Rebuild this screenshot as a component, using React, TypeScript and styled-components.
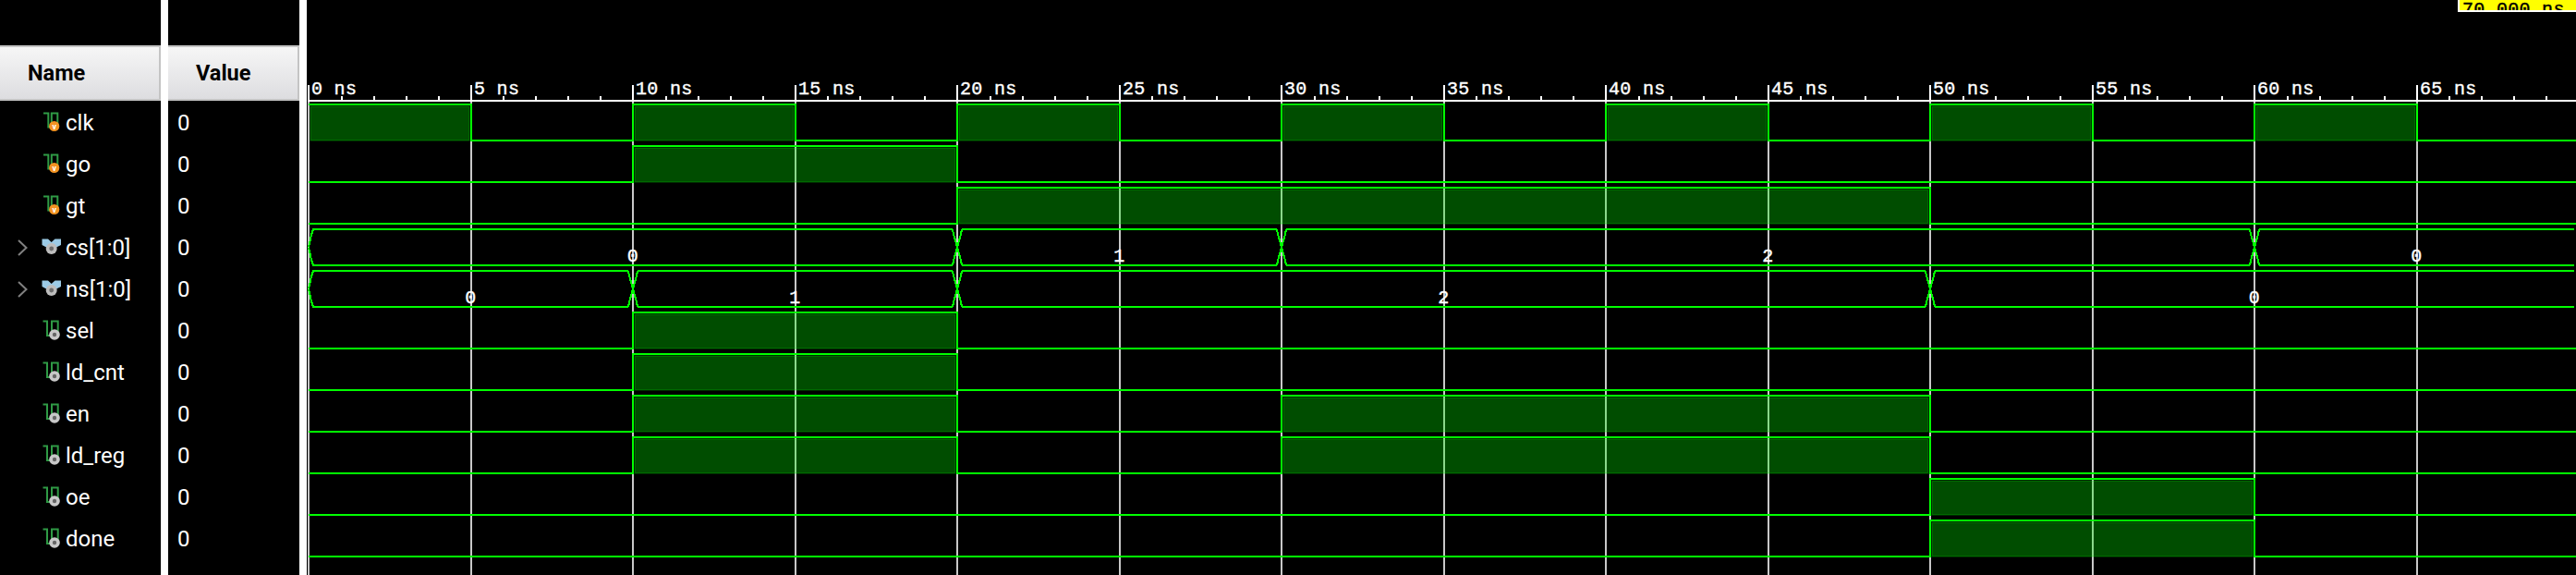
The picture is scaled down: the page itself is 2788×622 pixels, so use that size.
import React from "react";
import styled, { createGlobalStyle } from "styled-components";

const GlobalStyle = createGlobalStyle`
  html, body { margin: 0; padding: 0; background: #000; overflow: hidden; }
`;

type Kind = "input" | "local" | "bus";
type Signal = { name: string; kind: Kind; high?: [number, number][]; bus?: [number, number, string][] };

const signals: Signal[] = [
  { name: "clk", kind: "input", high: [[0, 5], [10, 15], [20, 25], [30, 35], [40, 45], [50, 55], [60, 65]] },
  { name: "go", kind: "input", high: [[10, 20]] },
  { name: "gt", kind: "input", high: [[20, 50]] },
  { name: "cs[1:0]", kind: "bus", bus: [[0, 20, "0"], [20, 30, "1"], [30, 60, "2"], [60, 70, "0"]] },
  { name: "ns[1:0]", kind: "bus", bus: [[0, 10, "0"], [10, 20, "1"], [20, 50, "2"], [50, 70, "0"]] },
  { name: "sel", kind: "local", high: [[10, 20]] },
  { name: "ld_cnt", kind: "local", high: [[10, 20]] },
  { name: "en", kind: "local", high: [[10, 20], [30, 50]] },
  { name: "ld_reg", kind: "local", high: [[10, 20], [30, 50]] },
  { name: "oe", kind: "local", high: [[50, 60]] },
  { name: "done", kind: "local", high: [[50, 60]] },
];

const ROW = 45;
const hiY = (i: number) => 113 + ROW * i;
const loY = (i: number) => 152 + ROW * i;
const tx = (ns: number) => Math.round(334.4 + 35.1 * ns);
const RIGHT = 2788;
const majors = Array.from({ length: 14 }, (_, i) => i * 5);
const minors = Array.from({ length: 71 }, (_, i) => i).filter((n) => n % 5 !== 0);

const Page = styled.div`
  display: flex;
  width: 2788px;
  height: 622px;
  background: #000;
  position: relative;
  overflow: hidden;
`;

const Pane = styled.div<{ $width: number }>`
  flex: 0 0 ${(p) => p.$width}px;
  padding-top: 49px;
  box-sizing: border-box;
`;

const Divider = styled.div`
  flex: 0 0 8px;
  background: #fff;
`;

const Header = styled.div<{ $pad: number }>`
  box-sizing: border-box;
  height: 60px;
  margin-bottom: 1px;
  padding-left: ${(p) => p.$pad}px;
  display: flex;
  align-items: center;
  background: linear-gradient(#f6f6f6, #dddde0);
  border-top: 2px solid #c4c4c4;
  border-bottom: 2px solid #c4c4c4;
  border-right: 2px solid #c4c4c4;
  font: 700 23.5px "Roboto", "Liberation Sans", sans-serif;
  color: #000;
`;

const Row = styled.div`
  height: 45px;
  display: flex;
  align-items: center;
  padding-left: 18px;
  color: #fff;
  font: 400 24px "Roboto", "Open Sans", sans-serif;
`;

const ValueRow = styled(Row)`
  padding-left: 10px;
`;

const Expander = styled.svg`
  flex: 0 0 12px;
  width: 12px;
  height: 18px;
  margin-right: 14px;
`;

const IconBox = styled.svg`
  flex: 0 0 24px;
  width: 24px;
  height: 24px;
  margin-right: 3px;
`;

const WaveCanvas = styled.svg`
  flex: 0 0 2456px;
  width: 2456px;
  height: 622px;
  display: block;
  shape-rendering: crispEdges;
`;

const RulerText = styled.text`
  font: 400 20px "Liberation Mono", monospace;
  letter-spacing: 0.3px;
  fill: #fff;
  stroke: #fff;
  stroke-width: 0.4px;
  white-space: pre;
`;

const BusText = styled(RulerText)`
  text-anchor: middle;
`;

const Cursor = styled.div`
  position: absolute;
  top: 0;
  right: 0;
  box-sizing: border-box;
  width: 128px;
  height: 13px;
  overflow: hidden;
  background: #ffff00;
  border-left: 2px solid #fff;
  border-bottom: 2px solid #fff;
  padding-left: 3px;
  color: #000;
  font: 400 20px/22px "Liberation Mono", monospace;
  -webkit-text-stroke: 0.4px #000;
  letter-spacing: 0.3px;
  white-space: pre;
`;

const Trace = styled.path`
  fill: none;
  stroke: #00ff00;
  stroke-width: 2;
`;

const Pulse = styled.rect`
  fill: rgba(0, 255, 0, 0.3);
  stroke: rgba(0, 255, 0, 0.16);
  stroke-width: 2;
`;

const GridLine = styled.rect`
  fill: #c8c8c8;
`;

const Tick = styled.rect`
  fill: #fff;
`;

const Chevron = () => (
  <Expander viewBox="0 0 12 18">
    <path d="M2 1 L10.5 9 L2 17" fill="none" stroke="#808080" strokeWidth="2" />
  </Expander>
);

const ScalarIcon = ({ kind }: { kind: Kind }) => (
  <IconBox viewBox="0 0 24 24">
    {kind === "input" ? (
      <>
        <path d="M3 1.5H8.3V16.5H11.8V1.5H18.3V13" fill="none" stroke="#2f9a45" strokeWidth="2" />
        <circle cx="14.7" cy="15.5" r="5.6" fill="#f39322" />
        <text x="14.7" y="19" fontSize="9" fontWeight="700" fontFamily="Roboto, sans-serif" fill="#fff" textAnchor="middle">
          v
        </text>
      </>
    ) : (
      <>
        <path d="M2.5 1.5H7V17H12V1.5H18.7V13" fill="none" stroke="#2f9a45" strokeWidth="2" />
        <circle cx="15" cy="16" r="5.8" fill="#c8c8c8" />
        <circle cx="15" cy="16" r="2.2" fill="#666" />
      </>
    )}
  </IconBox>
);

const BusIcon = () => (
  <IconBox viewBox="0 0 24 24">
    <path d="M1.5 2.5H8L11.7 6L15.5 2.5H22V9L16 12H7L1.5 9Z" fill="#9ccbe6" />
    <circle cx="11.7" cy="13" r="6" fill="#bdbdbd" />
    <circle cx="11.7" cy="13" r="2.4" fill="#6e6e6e" />
  </IconBox>
);

const scalarPath = (s: Signal, i: number) => {
  const hi = hiY(i);
  const lo = loY(i);
  const pulses = s.high ?? [];
  const startsHigh = pulses[0]?.[0] === 0;
  let d = `M${tx(0)} ${startsHigh ? hi : lo}`;
  pulses.forEach(([a, b]) => {
    if (a !== 0) d += `H${tx(a)}V${hi}`;
    d += `H${tx(b)}V${lo}`;
  });
  return d + `H${RIGHT}`;
};

const busPath = (s: Signal, i: number) => {
  const hi = hiY(i);
  const lo = loY(i);
  const mid = (hi + lo) / 2;
  let d = "";
  (s.bus ?? []).forEach(([a, b]) => {
    const l = tx(a);
    const r = tx(b) - 5;
    if (a === 0) {
      d += `M${l} ${mid}L${l + 3} ${hi + 6}L${l + 5} ${hi}H${r}`;
      d += `M${l} ${mid}L${l + 3} ${lo - 6}L${l + 5} ${lo}H${r}`;
    } else {
      d += `M${l + 5} ${hi}L${l + 4} ${hi + 5}L${l - 4} ${lo - 5}L${l - 5} ${lo}`;
      d += `M${l - 5} ${hi}L${l - 4} ${hi + 5}L${l + 4} ${lo - 5}L${l + 5} ${lo}`;
      d += `M${l + 5} ${hi}H${r}M${l + 5} ${lo}H${r}`;
    }
  });
  return d;
};

export default function App() {
  return (
    <Page>
      <GlobalStyle />
      <Pane $width={174}>
        <Header $pad={30}>Name</Header>
        {signals.map((s) => (
          <Row key={s.name}>
            {s.kind === "bus" ? <Chevron /> : <Expander as="span" />}
            {s.kind === "bus" ? <BusIcon /> : <ScalarIcon kind={s.kind} />}
            {s.name}
          </Row>
        ))}
      </Pane>
      <Divider />
      <Pane $width={142}>
        <Header $pad={30}>Value</Header>
        {signals.map((s) => (
          <ValueRow key={s.name}>0</ValueRow>
        ))}
      </Pane>
      <Divider />
      <WaveCanvas viewBox="332 0 2456 622">
        {majors.map((ns) => (
          <GridLine key={ns} x={tx(ns) - 1} y={110} width={2} height={512} />
        ))}
        <Tick x={334} y={108} width={RIGHT - 334} height={2} />
        {majors.map((ns) => (
          <g key={ns}>
            <Tick x={tx(ns) - 1} y={92} width={2} height={18} />
            <RulerText x={tx(ns) + 3} y={102}>{`${ns} ns`}</RulerText>
          </g>
        ))}
        {minors.map((ns) => (
          <Tick key={ns} x={tx(ns) - 1} y={104} width={2} height={5} />
        ))}
        {signals.map((s, i) =>
          s.kind === "bus" ? (
            <g key={s.name}>
              <Trace d={busPath(s, i)} />
              {(s.bus ?? []).map(([a, b, v]) => (
                <BusText key={a} x={(tx(a) + tx(b)) / 2} y={hiY(i) + 35}>
                  {v}
                </BusText>
              ))}
            </g>
          ) : (
            <g key={s.name}>
              {(s.high ?? []).map(([a, b]) => (
                <Pulse
                  key={a}
                  x={tx(a) + 2}
                  y={hiY(i) + 2}
                  width={tx(b) - tx(a) - 4}
                  height={loY(i) - hiY(i) - 2}
                />
              ))}
              <Trace d={scalarPath(s, i)} />
            </g>
          )
        )}
      </WaveCanvas>
      <Cursor>70.000 ns</Cursor>
    </Page>
  );
}
